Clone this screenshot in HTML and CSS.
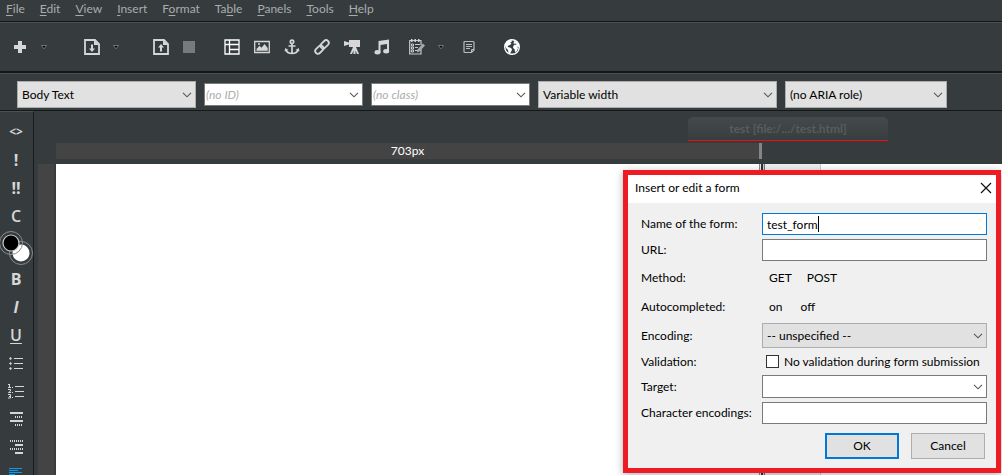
FILE: index.html
```html
<!DOCTYPE html>
<html lang="en">
<head>
<meta charset="utf-8">
<title>test.html - Editor</title>
<link rel="stylesheet" href="styles.css">
</head>
<body>
<nav class="menubar" aria-label="Main menu">
  <button><u>F</u>ile</button><button><u>E</u>dit</button><button><u>V</u>iew</button><button><u>I</u>nsert</button><button>F<u>o</u>rmat</button><button>Ta<u>b</u>le</button><button><u>P</u>anels</button><button><u>T</u>ools</button><button><u>H</u>elp</button>
</nav>

<div class="toolbar">
  <div class="group">
    <button aria-label="New"><svg viewBox="0 0 16 16"><path d="M6 2h4v4h4v4h-4v4H6v-4H2V6h4z"/></svg></button>
    <button class="arrow" aria-label="New options"><svg viewBox="0 0 8 8"><path d="M1.500 2.500h5L4 5.800z" fill="#000" stroke="#85898a" stroke-width=".8"/></svg></button>
  </div>
  <div class="group group-open">
    <button aria-label="Open"><svg viewBox="0 0 16 16"><path d="M1 1h10l4 4v10H1z" fill="none" stroke="#d6d6d6" stroke-width="1.800"/><path d="M10 1l5 5h-5zM7 5.500h2v4h2l-3 3.500-3-3.500h2z"/></svg></button>
    <button class="arrow" aria-label="Open options"><svg viewBox="0 0 8 8"><path d="M1.500 2.500h5L4 5.800z" fill="#000" stroke="#85898a" stroke-width=".8"/></svg></button>
  </div>
  <div class="group group-save">
    <button aria-label="Save"><svg viewBox="0 0 16 16"><path d="M1 1h10l4 4v10H1z" fill="none" stroke="#d6d6d6" stroke-width="1.800"/><path d="M10 1l5 5h-5zM7 12.500h2v-4h2l-3-3.500-3 3.500h2z"/></svg></button>
    <button aria-label="Stop"><svg viewBox="0 0 16 16"><path d="M2 2h12v12H2z" fill="#777b7b"/></svg></button>
  </div>
  <div class="group group-insert">
    <button aria-label="Table"><svg viewBox="0 0 16 16"><path d="M1 1h14v14H1zM1 5.500h14M5.500 1v14M5.500 10.500h9.500" fill="none" stroke="#fff" stroke-width="1.300"/></svg></button>
    <button aria-label="Image"><svg viewBox="0 0 16 16"><path d="M.700 2.500h14.600v11H.700z" fill="none" stroke="#d6d6d6" stroke-width="1.300"/><path d="M2.500 11.800V10l3-3.300 2 2L10.500 5l3.200 4v2.800z"/><circle cx="5" cy="5" r="1"/></svg></button>
    <button aria-label="Anchor"><svg viewBox="0 0 16 16"><g fill="none" stroke="#d6d6d6" stroke-width="1.700"><circle cx="8" cy="2.800" r="1.700"/><path d="M8 4.500V15M4.500 7h7M1.800 10.500Q3 14.500 8 14.500t6.200-4"/></g><path d="M.500 12.500L1.300 9 4.500 11zM15.500 12.500L14.700 9l-3.200 2z"/></svg></button>
    <button aria-label="Link"><svg viewBox="0 0 16 16"><g fill="none" stroke="#d6d6d6" stroke-width="1.800" transform="rotate(-45 8 8)"><rect x="-.500" y="5.300" width="9.500" height="5.400" rx="2.700"/><rect x="7" y="5.300" width="9.500" height="5.400" rx="2.700"/></g></svg></button>
    <button aria-label="Video"><svg viewBox="0 0 16 16"><path d="M5 1h11v7H5V5.500L0 7V2l5 1.500zM9.500 8h2v7h-2zM9 8h2l-3 7H6zM10 8h2l3 7h-2z"/></svg></button>
    <button aria-label="Audio"><svg viewBox="0 0 16 16"><path d="M4.500 2L15 .500V12h-2V5L6.500 6v7.500h-2z"/><ellipse cx="3.500" cy="13.300" rx="3" ry="2.200"/><ellipse cx="12.200" cy="12.300" rx="3" ry="2.200"/></svg></button>
  </div>
  <div class="group group-form">
    <button aria-label="Form"><svg viewBox="0 0 16 16"><path d="M12 10v5H.700V1.500H12V6" fill="none" stroke="#c8c8c8" stroke-width="1.200"/><path d="M2 0h1.500v3H2zM5.500 0H7v3H5.500zM9 0h1.500v3H9z"/><path d="M2.500 5h2v2h-2zM2.500 8h2v2h-2zM2.500 11h2v2h-2zM6 5.500h5M6 8.500h3M6 11.500h3" fill="none" stroke="#c8c8c8"/><path d="M13.800 4.500L16 6.500l-5.500 6-2.500 1 .600-3z" fill="#a8aaaa"/></svg></button>
    <button class="arrow" aria-label="Form options"><svg viewBox="0 0 8 8"><path d="M1.500 2.500h5L4 5.800z" fill="#000" stroke="#85898a" stroke-width=".8"/></svg></button>
  </div>
  <div class="group group-note">
    <button aria-label="Notes"><svg viewBox="0 0 16 16"><path d="M4 2.500h8q1 0 1 1v7.500L10.500 13.500H4q-1 0-1-1v-9q0-1 1-1z" fill="none" stroke="#bbb" stroke-width="1.200"/><path d="M5 5.500h6M5 7.500h6M5 9.500h4M10.500 13.500v-3H13" fill="none" stroke="#bbb"/></svg></button>
  </div>
  <div class="group group-web">
    <button aria-label="Browse"><svg viewBox="0 0 16 16"><circle cx="8" cy="8" r="7.300" fill="#363c3e" stroke="#fff" stroke-width="1.400"/><path d="M1 6l2-3.500L6 1l2 .500L7.500 3 6 3.500l1.500 1L6 6 4.500 6.500l-1 1.500L6 8.500l2 1.500-.500 2-1.500 2.500-1.500-.500-.500-3L2 9zM10 2l2.500.500L15 6v2l-1.500-.500.500 2-1.500 3L11 13l-.500-3L9 9l.500-2.500L11 5.500l1 .500.500-1L11 4.500l-1.500.500z" fill="#fff"/></svg></button>
  </div>
</div>

<div class="formatbar">
  <span class="combo combo-tag"><select aria-label="Element"><option>Body Text</option></select><svg viewBox="0 0 10 6"><path d="M1 .800l4 4 4-4"/></svg></span>
  <span class="combo combo-text"><input type="text" aria-label="ID" placeholder="(no ID)"><svg viewBox="0 0 10 6"><path d="M1 .800l4 4 4-4"/></svg></span>
  <span class="combo combo-text"><input type="text" aria-label="Class" placeholder="(no class)"><svg viewBox="0 0 10 6"><path d="M1 .800l4 4 4-4"/></svg></span>
  <span class="combo combo-font"><select aria-label="Font"><option>Variable width</option></select><svg viewBox="0 0 10 6"><path d="M1 .800l4 4 4-4"/></svg></span>
  <span class="combo combo-aria"><select aria-label="ARIA role"><option>(no ARIA role)</option></select><svg viewBox="0 0 10 6"><path d="M1 .800l4 4 4-4"/></svg></span>
</div>

<main class="workspace">
  <div class="sidebar">
    <button class="code" aria-label="Code">&lt;&gt;</button>
    <button>!</button>
    <button>!!</button>
    <button class="letter-c">C</button>
    <button class="colors" aria-label="Text and background colours"><svg viewBox="0 0 34 35"><circle cx="21" cy="23" r="11.500" fill="none" stroke="#888d8e"/><circle cx="21" cy="23" r="8.500" fill="#fff"/><circle cx="11" cy="13" r="11.500" fill="none" stroke="#888d8e"/><circle cx="11" cy="13" r="8" fill="#000" stroke="#c8caca" stroke-width="1.200"/></svg></button>
    <button>B</button>
    <button class="italic">I</button>
    <button class="underline">U</button>
    <button aria-label="Bulleted list"><svg viewBox="0 0 16 16"><path d="M6 3.500h9M6 8.500h9M6 13.500h9" class="line"/><path d="M2.500 2L4 3.500 2.500 5 1 3.500zM2.500 7L4 8.500 2.500 10 1 8.500zM2.500 12L4 13.500 2.500 15 1 13.500z"/></svg></button>
    <button aria-label="Numbered list"><svg viewBox="0 0 16 16"><path d="M7 3.500h9M7 8.500h9M7 13.500h9M1.500 1v4M0 1.500h1.500M0 4.500h3M0 6.500h2.500v1.500L.500 9.500H3M0 11.500h2.500v3.500H0M1 13.500h2M4 4.500h1M4 9.500h1M4 14.500h1" class="line"/></svg></button>
    <button aria-label="Indent"><svg viewBox="0 0 16 16"><path d="M2 1h13v2H2zM2 9h13v2H2z"/><path d="M7 6h8M7 14h8" class="line dash"/></svg></button>
    <button aria-label="Outdent"><svg viewBox="0 0 16 16"><path d="M7 5h8v2H7zM7 13h8v2H7z"/><path d="M2 2h13M2 10h13" class="line dash"/></svg></button>
    <button aria-label="Align left"><svg viewBox="0 0 16 16"><path d="M1 1.500h13M1 3.500h9M1 5.500h13M1 7.500h6M1 9.500h13" fill="none" stroke="#009dff"/></svg></button>
  </div>

  <section class="editor">
    <div class="tabs"><button class="tab">test [file:/.../test.html]</button></div>
    <div class="ruler"><div class="ruler-size">703px</div></div>
    <div class="canvas">
      <div class="ruler-side"></div>
      <div class="page"></div>
      <div class="splitter"></div>
      <div class="gutter"></div>
      <div class="source"></div>
    </div>
  </section>
</main>

<form class="dialog" role="dialog" aria-labelledby="dialog-title">
  <header class="titlebar">
    <h1 id="dialog-title">Insert or edit a form</h1>
    <button type="button" class="close" aria-label="Close"><svg viewBox="0 0 12 12"><path d="M1 1l10 10M11 1L1 11"/></svg></button>
  </header>
  <div class="fields">
    <label for="name">Name of the form:</label>
    <span class="namebox"><span class="typed" aria-hidden="true">test_form</span><input id="name" type="text" value="test_form"></span>
    <label for="url">URL:</label>
    <input id="url" type="text">
    <span>Method:</span>
    <div class="choices choices-method"><label><input type="radio" name="method">GET</label><label><input type="radio" name="method">POST</label></div>
    <span>Autocompleted:</span>
    <div class="choices choices-auto"><label><input type="radio" name="auto">on</label><label><input type="radio" name="auto">off</label></div>
    <label for="encoding">Encoding:</label>
    <span class="combo"><select id="encoding"><option>-- unspecified --</option></select><svg viewBox="0 0 10 6"><path d="M1 .800l4 4 4-4"/></svg></span>
    <span>Validation:</span>
    <label class="check"><input type="checkbox">No validation during form submission</label>
    <label for="target">Target:</label>
    <span class="combo"><input id="target" type="text"><svg viewBox="0 0 10 6"><path d="M1 .800l4 4 4-4"/></svg></span>
    <label for="charset">Character encodings:</label>
    <input id="charset" type="text">
  </div>
  <div class="actions"><button type="submit" class="default">OK</button><button type="button">Cancel</button></div>
</form>
</body>
</html>
```
FILE: styles.css
```css
* { box-sizing: border-box; }

body {
  margin: 0;
  height: 100vh;
  overflow: hidden;
  display: flex;
  flex-direction: column;
  position: relative;
  background: #363c3e;
  color: #000;
  font: 12px/16px Lato, "Open Sans", sans-serif;
}

button, input, select { font: inherit; color: inherit; margin: 0; border-radius: 0; }
button { padding: 0; border: 0; background: none; }
svg { display: block; fill: #d6d6d6; }

.menubar {
  display: flex;
  gap: 15px;
  padding: 1px 6px 4px;
  color: #a9acad;
  border-bottom: 1px solid #151718;
}
.menubar u { text-underline-offset: 2px; }

.toolbar {
  display: flex;
  align-items: center;
  height: 51px;
  padding: 0 12px;
  border-top: 1px solid #4b5153;
  border-bottom: 2px solid #151718;
}
.group { display: flex; align-items: center; gap: 12px; }
.group button { width: 16px; height: 16px; }
.group svg { overflow: visible; }
.group .arrow { width: 8px; height: 8px; }
.group .arrow svg { width: 8px; height: 8px; }
.group-open { margin-left: 36px; }
.group-save { margin-left: 33px; }
.group-insert { margin-left: 27px; gap: 14px; }
.group-form { margin-left: 19px; }
.group-note { margin-left: 16px; }
.group-web { margin-left: 27px; }

.formatbar {
  display: flex;
  align-items: center;
  gap: 8px;
  padding: 7px 17px 2px;
  border-top: 1px solid #4b5153;
  border-bottom: 1px solid #151718;
}
.combo { display: grid; align-items: center; }
.combo > * { grid-area: 1 / 1; }
.combo svg { width: 10px; height: 6px; justify-self: end; margin-right: 4px; pointer-events: none; }
.combo path { fill: none; stroke: #555; stroke-width: 1.1; }
.combo select, .combo input { width: 100%; }
.formatbar .combo input { height: 23px; }
.formatbar .combo select { height: 27px; }
.combo-tag { width: 179px; }
.combo-text { width: 159px; }
.combo-font { width: 239px; }
.combo-aria { width: 162px; }

select {
  appearance: none;
  height: 25px;
  padding: 0 4px;
  background: #e1e1e1;
  border: 1px solid #adadad;
}
input[type="text"] {
  height: 22px;
  padding: 0 4px;
  background: #fff;
  border: 1px solid #7a7a7a;
  outline: 0;
}
.combo-text input[type="text"] { padding: 0 1px; }
.combo-text input::placeholder { color: #adadad; font-style: italic; opacity: 1; }

.workspace { display: flex; flex: 1; min-height: 0; }
.sidebar {
  width: 34px;
  padding-top: 6px;
  border-top: 1px solid #4b5153;
  border-right: 1px solid #181b1c;
  overflow: hidden;
}
.sidebar button {
  display: flex;
  justify-content: center;
  align-items: center;
  width: 32px;
  height: 28px;
  color: #d6d6d6;
  font: 700 16px/16px "Open Sans", "Noto Sans", sans-serif;
}
.sidebar svg { width: 16px; height: 16px; }
.sidebar .line { fill: none; stroke: #d6d6d6; }
.sidebar .dash { stroke-width: 2; stroke-dasharray: 1 1; }
.sidebar .code { font-size: 12px; }
.sidebar .letter-c { font-weight: 600; }
.sidebar .italic { font-style: italic; }
.sidebar .underline { text-decoration: underline; text-underline-offset: 2px; font-weight: 600; }
.sidebar .colors { width: 34px; height: 35px; justify-content: flex-start; }
.sidebar .colors svg { width: 34px; height: 35px; }

.editor { flex: 1; display: flex; flex-direction: column; min-width: 0; }
.tabs { display: flex; justify-content: flex-end; padding: 6px 114px 2px 0; }
.tab {
  width: 200px;
  height: 24px;
  color: #585c5d;
  font-weight: 700;
  background: linear-gradient(#45494a, #383e40);
  border-bottom: 1px solid #f50b0b;
  border-radius: 5px 5px 0 0;
}
.ruler { padding-left: 22px; }
.ruler-size {
  width: 706px;
  height: 16px;
  color: #fff;
  text-align: center;
  background: #454444;
  border-right: 3px solid #858585;
}
.canvas { flex: 1; display: flex; padding: 5px 0 0 4px; }
.ruler-side { width: 16px; background: #454444; margin-right: 2px; }
.page { width: 703px; background: #fff; }
.splitter {
  width: 6px;
  background: linear-gradient(90deg, #888 1px, #eee 1px 2px, #333 2px 4px, #ccc 4px 5px, #777 5px);
}
.gutter { width: 56px; background: #efefef; border-right: 1px solid #ccc; }
.source { flex: 1; background: #fff; }

.dialog {
  position: absolute;
  top: 170px;
  right: 1px;
  width: 378px;
  background: #f0f0f0;
  border: 5px solid #ed1c24;
  box-shadow: 0 2px 8px rgba(0, 0, 0, .3);
}
.titlebar {
  display: flex;
  align-items: center;
  justify-content: space-between;
  height: 28px;
  padding: 0 4px 3px 7px;
  background: #fff;
}
.titlebar h1 { margin: 0; font-size: 12px; font-weight: 400; }
.close svg { width: 12px; height: 12px; }
.close path { fill: none; stroke: #111; stroke-width: 1.2; }
.fields {
  display: grid;
  grid-template-columns: 121px minmax(0, 1fr);
  grid-template-rows: 22px 22px 26px 24px 25px 19px 23px 22px;
  gap: 4px 0;
  align-items: center;
  padding: 10px 9px 0 13px;
}
.fields > label, .fields > span:not(.combo) { white-space: nowrap; }
.fields .combo input { height: 23px; }
.namebox { display: grid; align-items: center; }
.namebox > * { grid-area: 1 / 1; }
.fields .namebox input { border-color: #0078d7; }
.typed { z-index: 1; justify-self: start; margin-left: 5px; color: transparent; border-right: 1px solid #000; pointer-events: none; }
.choices { display: flex; padding-left: 7px; }
.choices-method { gap: 15px; }
.choices-auto { gap: 18px; }
.choices input { appearance: none; width: 0; height: 0; }
.choices label { display: flex; }
.fields .check { display: flex; align-items: center; gap: 5px; padding-left: 4px; }
.check input {
  appearance: none;
  flex: none;
  width: 13px;
  height: 13px;
  background: #fff;
  border: 1px solid #333;
}
.actions { display: flex; justify-content: flex-end; gap: 12px; padding: 9px 11px 9px; }
.actions button { width: 74px; height: 26px; background: #e1e1e1; border: 1px solid #adadad; }
.actions .default { border: 2px solid #0078d7; }
```
